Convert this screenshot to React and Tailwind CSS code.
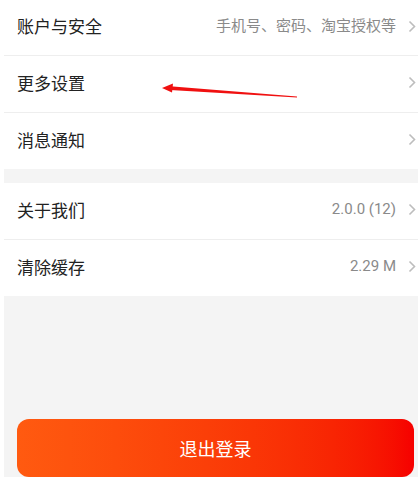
import React from "react";

const font = { fontFamily: '"Noto Sans CJK SC", "Noto Sans", sans-serif' };
const valueFont = { fontFamily: 'Roboto, "Noto Sans CJK SC", sans-serif' };

function Chevron() {
  return (
    <svg width="8" height="13" viewBox="0 0 8 13" className="shrink-0">
      <polyline points="1.5,1.5 6.5,6.5 1.5,11.5" fill="none" stroke="#bdbdbd" strokeWidth="1.6" />
    </svg>
  );
}

function Row({ label, value, divider, h = "h-[57px]" }) {
  return (
    <div className={"flex items-center pl-[13px] pr-[2px] pb-[3px] bg-white " + h + (divider ? " border-b border-[#eeeeee]" : "")}>
      <span className="text-[17px] text-[#222222] flex-1">{label}</span>
      {value && <span className="text-[15px] text-[#8a8a8a] mr-[12px]" style={valueFont}>{value}</span>}
      <Chevron />
    </div>
  );
}

export default function App() {
  return (
    <div className="relative flex w-[418px] h-[477px] overflow-hidden bg-white" style={font}>
      <div className="w-[4px] shrink-0 bg-white" />
      <div className="flex-1 flex flex-col bg-[#f4f4f4]">
        <Row label="账户与安全" value="手机号、密码、淘宝授权等" divider h="h-[56px]" />
        <Row label="更多设置" divider />
        <Row label="消息通知" h="h-[56px]" />
        <div className="h-[14px]" />
        <Row label="关于我们" value="2.0.0 (12)" divider />
        <Row label="清除缓存" value="2.29 M" h="h-[56px]" />
        <div className="mt-[123px] ml-[13px] mr-[4px] h-[58px] shrink-0 rounded-[12px] bg-gradient-to-r from-[#ff5a10] to-[#f60000] flex items-center justify-center">
          <span className="text-[18px] text-white">退出登录</span>
        </div>
      </div>
      <svg className="absolute left-0 top-0" width="418" height="477" viewBox="0 0 418 477">
        <polygon points="170,86.2 297,96.5 297,97.5 170,90" fill="#f01010" />
        <polygon points="162,88 173,83.5 172,92.5" fill="#f01010" />
      </svg>
    </div>
  );
}
